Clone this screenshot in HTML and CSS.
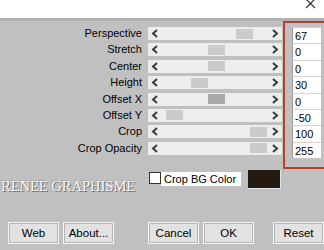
FILE: index.html
```html
<!DOCTYPE html>
<html lang="en">
<head>
    <meta charset="UTF-8">
    <title>Perspective</title>
    <link rel="stylesheet" href="styles.css">
</head>
<body>
    <div class="titlebar">
        <svg class="close" width="12" height="10" viewBox="0 0 12 10">
            <path d="M1 0 L10 9 M10 0 L1 9" stroke="#333" stroke-width="1.2" fill="none"/>
        </svg>
    </div>
    <div class="band"></div>

    <div class="main">
        <div class="sliders">
            <span class="label">Perspective</span>
            <div class="track"><svg class="arrow" viewBox="0 0 14 13"><path d="M9 3 L5 6.5 L9 10"/></svg><div class="rail"><div class="thumb" style="left: 74px;"></div></div><svg class="arrow" viewBox="0 0 14 13"><path d="M5 3 L9 6.5 L5 10"/></svg></div>
            <span class="label">Stretch</span>
            <div class="track"><svg class="arrow" viewBox="0 0 14 13"><path d="M9 3 L5 6.5 L9 10"/></svg><div class="rail"><div class="thumb" style="left: 46px;"></div></div><svg class="arrow" viewBox="0 0 14 13"><path d="M5 3 L9 6.5 L5 10"/></svg></div>
            <span class="label">Center</span>
            <div class="track"><svg class="arrow" viewBox="0 0 14 13"><path d="M9 3 L5 6.5 L9 10"/></svg><div class="rail"><div class="thumb" style="left: 46px;"></div></div><svg class="arrow" viewBox="0 0 14 13"><path d="M5 3 L9 6.5 L5 10"/></svg></div>
            <span class="label">Height</span>
            <div class="track"><svg class="arrow" viewBox="0 0 14 13"><path d="M9 3 L5 6.5 L9 10"/></svg><div class="rail"><div class="thumb" style="left: 29px;"></div></div><svg class="arrow" viewBox="0 0 14 13"><path d="M5 3 L9 6.5 L5 10"/></svg></div>
            <span class="label">Offset X</span>
            <div class="track"><svg class="arrow" viewBox="0 0 14 13"><path d="M9 3 L5 6.5 L9 10"/></svg><div class="rail"><div class="thumb active" style="left: 46px;"></div></div><svg class="arrow" viewBox="0 0 14 13"><path d="M5 3 L9 6.5 L5 10"/></svg></div>
            <span class="label">Offset Y</span>
            <div class="track"><svg class="arrow" viewBox="0 0 14 13"><path d="M9 3 L5 6.5 L9 10"/></svg><div class="rail"><div class="thumb" style="left: 4px;"></div></div><svg class="arrow" viewBox="0 0 14 13"><path d="M5 3 L9 6.5 L5 10"/></svg></div>
            <span class="label">Crop</span>
            <div class="track"><svg class="arrow" viewBox="0 0 14 13"><path d="M9 3 L5 6.5 L9 10"/></svg><div class="rail"><div class="thumb" style="left: 88px;"></div></div><svg class="arrow" viewBox="0 0 14 13"><path d="M5 3 L9 6.5 L5 10"/></svg></div>
            <span class="label">Crop Opacity</span>
            <div class="track"><svg class="arrow" viewBox="0 0 14 13"><path d="M9 3 L5 6.5 L9 10"/></svg><div class="rail"><div class="thumb" style="left: 88px;"></div></div><svg class="arrow" viewBox="0 0 14 13"><path d="M5 3 L9 6.5 L5 10"/></svg></div>
        </div>

        <div class="values">
            <div class="value">67</div>
            <div class="value">0</div>
            <div class="value">0</div>
            <div class="value">30</div>
            <div class="value">0</div>
            <div class="value">-50</div>
            <div class="value">100</div>
            <div class="value">255</div>
        </div>
    </div>

    <div class="bottom">
        <span class="logo">RENEE GRAPHISME</span>
        <span class="check"></span>
        <span class="check-label">Crop BG Color</span>
        <span class="swatch"></span>
    </div>

    <div class="buttons">
        <button class="btn web">Web</button>
        <button class="btn about">About...</button>
        <button class="btn cancel">Cancel</button>
        <button class="btn ok">OK</button>
        <button class="btn reset">Reset</button>
    </div>
</body>
</html>
```

FILE: styles.css
```css
body {
    margin: 0;
    width: 324px;
    height: 250px;
    overflow: hidden;
    background-color: #c0c0c0;
    font-family: "Liberation Sans", Arial, sans-serif;
    font-size: 11px;
    color: #000;
}
.titlebar {
    height: 18px;
    background-color: #fff;
    position: relative;
}
.close {
    position: absolute;
    left: 305px;
    top: -1px;
}
.band {
    height: 3px;
    background-color: #b0b0b0;
}
.main {
    display: flex;
    height: 148px;
}
.sliders {
    display: grid;
    grid-template-columns: 142px 134px;
    grid-auto-rows: 13px;
    column-gap: 6px;
    row-gap: 3.4px;
    padding-top: 6px;
    width: 282px;
}
.label {
    text-align: right;
    line-height: 13px;
    white-space: nowrap;
}
.track {
    display: flex;
    align-items: center;
    background-color: #ededed;
}
.arrow {
    width: 14px;
    height: 13px;
    flex: none;
}
.arrow path {
    fill: none;
    stroke: #3a3a3a;
    stroke-width: 2;
}
.rail {
    flex: 1;
    height: 10px;
    position: relative;
}
.thumb {
    position: absolute;
    top: 0;
    width: 17px;
    height: 10px;
    background-color: #cbcbcb;
}
.thumb.active {
    background-color: #a9a9a9;
}
.values {
    margin-left: 1px;
    width: 50px;
    border: 2px solid #b5402f;
    border-right: none;
    padding: 4px 0 0 7px;
    box-sizing: border-box;
}
.value {
    width: 29px;
    height: 16.4px;
    line-height: 16px;
    background-color: #fff;
    padding-left: 2px;
    box-sizing: border-box;
    border-left: 1px solid #9a9a9a;
    border-top: 1px solid #d4d4d4;
}
.bottom {
    display: flex;
    align-items: center;
    height: 20px;
}
.logo {
    font-family: "Liberation Serif", "Times New Roman", serif;
    font-size: 14.5px;
    color: #fafafa;
    text-shadow: 1px 1px 0 #6e6e6e, -1px -1px 0 #a8a8a8;
    margin-left: 1px;
    padding-top: 15px;
    width: 148px;
    white-space: nowrap;
}
.check {
    width: 10px;
    height: 10px;
    background-color: #fff;
    border: 1px solid #333;
    margin-top: -2px;
}
.check-label {
    background-color: #fff;
    width: 77px;
    height: 14px;
    line-height: 14px;
    padding-left: 3px;
    font-size: 11px;
    margin-top: -1px;
}
.swatch {
    width: 33px;
    height: 19px;
    margin-left: 7px;
    background-color: #231a12;
    border-bottom: 1px solid #e4e4e4;
    border-right: 1px solid #e4e4e4;
    box-sizing: border-box;
}
.buttons {
    display: flex;
    margin-top: 33px;
}
.btn {
    width: 51px;
    height: 22px;
    padding: 0;
    font-family: "Liberation Sans", Arial, sans-serif;
    font-size: 11.5px;
    color: #000;
    background-color: #e2e2e2;
    border: 1px solid #f6f6f6;
    box-shadow: inset 0 0 0 1px #b4b4b4;
}
.web {
    margin-left: 8px;
}
.about {
    margin-left: 4px;
}
.cancel {
    margin-left: 34px;
}
.ok {
    margin-left: 4px;
}
.reset {
    margin-left: 19px;
}
```
